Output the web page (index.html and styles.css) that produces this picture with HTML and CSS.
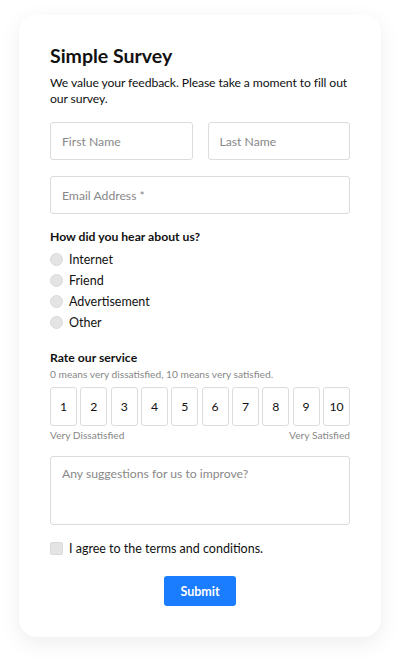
FILE: index.html
```html
<!DOCTYPE html>
<html lang="en">
<head>
  <meta charset="UTF-8">
  <meta name="viewport" content="width=device-width, initial-scale=1.0">
  <title>Simple Survey</title>
  <link rel="stylesheet" href="styles.css">
</head>
<body>
  <!-- Survey Card -->
  <form class="card">
    <h1>Simple Survey</h1>
    <p class="intro">We value your feedback. Please take a moment to fill out our survey.</p>

    <div class="row">
      <input type="text" class="field" placeholder="First Name">
      <input type="text" class="field" placeholder="Last Name">
    </div>
    <input type="email" class="field" placeholder="Email Address *">

    <div class="group">
      <h2>How did you hear about us?</h2>
      <label class="option"><span class="radio"></span>Internet</label>
      <label class="option"><span class="radio"></span>Friend</label>
      <label class="option"><span class="radio"></span>Advertisement</label>
      <label class="option"><span class="radio"></span>Other</label>
    </div>

    <div class="group">
      <h2 class="tight">Rate our service</h2>
      <p class="hint">0 means very dissatisfied, 10 means very satisfied.</p>
      <div class="scale">
        <span>1</span><span>2</span><span>3</span><span>4</span><span>5</span>
        <span>6</span><span>7</span><span>8</span><span>9</span><span>10</span>
      </div>
      <div class="scale-labels">
        <span>Very Dissatisfied</span>
        <span>Very Satisfied</span>
      </div>
    </div>

    <textarea class="field area" placeholder="Any suggestions for us to improve?"></textarea>

    <label class="agree"><span class="check"></span>I agree to the terms and conditions.</label>

    <div class="actions">
      <button type="button" class="submit">Submit</button>
    </div>
  </form>
</body>
</html>
```

FILE: styles.css
```css
body {
  margin: 0;
  font-family: Lato, "Noto Sans", sans-serif;
  background: #fff;
  color: #111;
  padding: 15px 19px 24px;
}

.card {
  background: #fff;
  border-radius: 18px;
  box-shadow: 0 6px 22px rgba(0, 0, 0, 0.07);
  padding: 30px 31px 31px;
  display: flex;
  flex-direction: column;
}

h1 {
  margin: 0;
  font-size: 19.5px;
  font-weight: 700;
  line-height: 22px;
}

.intro {
  margin: 8px 0 15px;
  font-size: 12.2px;
  letter-spacing: -0.1px;
  line-height: 16px;
}

.row {
  display: flex;
  gap: 15px;
  margin-bottom: 16px;
}

.field {
  box-sizing: border-box;
  width: 100%;
  height: 38px;
  border: 1px solid #dcdcdc;
  border-radius: 3px;
  padding: 0 11px;
  font: inherit;
  font-size: 12.2px;
  color: #333;
  outline: none;
}

.row .field {
  flex: 1;
  min-width: 0;
}

.field::placeholder {
  color: #888;
}

.group {
  margin-top: 15px;
}

h2 {
  margin: 0 0 4px;
  font-size: 12.2px;
  font-weight: 700;
  line-height: 16px;
}

h2.tight {
  margin-bottom: 1px;
}

.option {
  display: flex;
  align-items: center;
  gap: 6px;
  height: 21px;
  font-size: 12.5px;
}

.radio {
  width: 13px;
  height: 13px;
  border-radius: 50%;
  background: #e4e4e4;
  border: 1px solid #d9d9d9;
  box-sizing: border-box;
}

.group + .group {
  margin-top: 17px;
}

.hint {
  margin: 0 0 6px;
  font-size: 10.2px;
  color: #888;
  line-height: 14px;
}

.scale {
  display: flex;
  gap: 3.3px;
}

.scale span {
  flex: 1;
  height: 39px;
  box-sizing: border-box;
  border: 1px solid #dcdcdc;
  border-radius: 3px;
  display: flex;
  align-items: center;
  justify-content: center;
  font-size: 12.2px;
}

.scale-labels {
  display: flex;
  justify-content: space-between;
  margin-top: 2px;
  font-size: 10.2px;
  line-height: 14px;
  color: #888;
}

.area {
  margin-top: 14px;
  height: 69px;
  padding: 9px 11px;
  resize: none;
}

.agree {
  display: flex;
  align-items: center;
  gap: 6px;
  margin-top: 16px;
  font-size: 12.5px;
}

.check {
  width: 13px;
  height: 13px;
  border-radius: 2px;
  background: #e4e4e4;
  border: 1px solid #d9d9d9;
  box-sizing: border-box;
}

.actions {
  display: flex;
  justify-content: center;
  margin-top: 20px;
}

.submit {
  width: 72px;
  height: 30px;
  border: none;
  border-radius: 3px;
  background: #1a7cff;
  color: #fff;
  font: inherit;
  font-size: 12.5px;
  font-weight: 700;
  cursor: pointer;
}
```
